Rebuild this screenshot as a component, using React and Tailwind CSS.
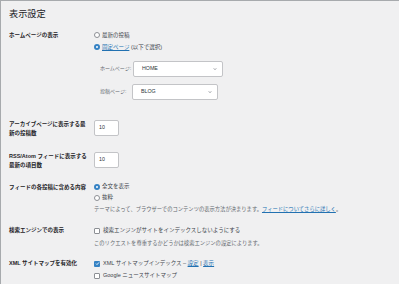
import React from 'react';

const font = { fontFamily: '"Liberation Sans", "Noto Sans CJK JP", sans-serif' };

function Radio({ checked }) {
  return checked ? (
    <span className="w-[6px] h-[6px] rounded-full border-[2px] border-[#3582c4] bg-white shrink-0" />
  ) : (
    <span className="w-[6px] h-[6px] rounded-full border border-[#8c8f94] bg-white shrink-0" />
  );
}

function Checkbox({ checked }) {
  return checked ? (
    <span className="w-[6px] h-[6px] rounded-[1px] bg-[#3582c4] shrink-0 flex items-center justify-center">
      <svg viewBox="0 0 10 10" className="w-[5px] h-[5px]" fill="none" stroke="white" strokeWidth="1.8">
        <path d="M2 5.2l2 2L8 2.8" />
      </svg>
    </span>
  ) : (
    <span className="w-[6px] h-[6px] rounded-[1px] border border-[#8c8f94] bg-white shrink-0" />
  );
}

function Chevron() {
  return (
    <svg viewBox="0 0 10 10" className="w-[4px] h-[4px]" fill="none" stroke="#50575e" strokeWidth="1.6">
      <path d="M2 3.5l3 3 3-3" />
    </svg>
  );
}

function Label({ children, className = '' }) {
  return (
    <div className={`w-[85px] shrink-0 pr-[7px] font-bold text-[5.5px] leading-[8.5px] text-[#1d2327] ${className}`}>
      {children}
    </div>
  );
}

export default function App() {
  return (
    <div style={font} className="w-[399px] h-[284px] overflow-hidden bg-[#f0f0f1] border-l border-t border-[#a7aaad] pl-[8px] text-[#1d2327]">
      <h1 className="mt-[8px] text-[9.2px] leading-[11px] font-normal text-[#1d2327]">表示設定</h1>

      {/* ホームページの表示 */}
      <div className="flex mt-[9px]">
        <Label className="pt-[1.75px]">ホームページの表示</Label>
        <div className="flex flex-col text-[5.5px]">
          <div className="h-[12px] flex items-center gap-[2px] text-[#3c434a]">
            <Radio />
            <span>最新の投稿</span>
          </div>
          <div className="h-[12px] flex items-center gap-[2px] text-[#3c434a]">
            <Radio checked />
            <span><a className="text-[#2271b1] underline">固定ページ</a> (以下で選択)</span>
          </div>
          <div className="mt-[8px] pl-[6px] flex items-center text-[#646970]">
            <span className="w-[33px] whitespace-nowrap text-[5px]">ホームページ:</span>
            <div className="w-[90px] h-[16px] bg-white border border-[#c3c4c7] rounded-[2px] flex items-center justify-between pl-[8px] pr-[5px] text-[#2c3338] text-[5.3px]">
              <span>HOME</span>
              <Chevron />
            </div>
          </div>
          <div className="mt-[7px] pl-[6px] flex items-center text-[#646970]">
            <span className="w-[32px] whitespace-nowrap text-[5px]">投稿ページ:</span>
            <div className="w-[86px] h-[16px] bg-white border border-[#c3c4c7] rounded-[2px] flex items-center justify-between pl-[8px] pr-[5px] text-[#2c3338] text-[5.3px]">
              <span>BLOG</span>
              <Chevron />
            </div>
          </div>
        </div>
      </div>

      {/* アーカイブ */}
      <div className="flex mt-[20px]">
        <Label>アーカイブページに表示する最新の投稿数</Label>
        <div className="w-[25px] h-[16px] bg-white border border-[#c3c4c7] rounded-[2px] flex items-center pl-[4px] text-[5.3px] text-[#2c3338]">10</div>
      </div>

      {/* RSS */}
      <div className="flex mt-[15px]">
        <Label>RSS/Atom フィードに表示する最新の項目数</Label>
        <div className="w-[25px] h-[16px] bg-white border border-[#c3c4c7] rounded-[2px] flex items-center pl-[4px] text-[5.3px] text-[#2c3338]">10</div>
      </div>

      {/* フィード */}
      <div className="flex mt-[12px]">
        <Label className="pt-[1.5px]">フィードの各投稿に含める内容</Label>
        <div className="flex flex-col text-[5.5px]">
          <div className="h-[11px] flex items-center gap-[2px] text-[#3c434a]">
            <Radio checked />
            <span>全文を表示</span>
          </div>
          <div className="h-[11px] flex items-center gap-[2px] text-[#3c434a]">
            <Radio />
            <span>抜粋</span>
          </div>
          <p className="mt-[2px] text-[5.3px] leading-[8px] text-[#646970]">
            テーマによって、ブラウザーでのコンテンツの表示方法が決まります。<a className="text-[#2271b1] underline">フィードについてさらに詳しく</a>。
          </p>
        </div>
      </div>

      {/* 検索エンジン */}
      <div className="flex mt-[12px]">
        <Label className="pt-[1.25px]">検索エンジンでの表示</Label>
        <div className="flex flex-col text-[5.5px]">
          <div className="h-[11px] flex items-center gap-[3px] text-[#3c434a]">
            <Checkbox />
            <span>検索エンジンがサイトをインデックスしないようにする</span>
          </div>
          <p className="mt-[3px] text-[5.3px] leading-[8px] text-[#646970]">
            このリクエストを尊重するかどうかは検索エンジンの設定によります。
          </p>
        </div>
      </div>

      {/* XML サイトマップ */}
      <div className="flex mt-[10.5px]">
        <Label className="pt-[1.75px]">XML サイトマップを有効化</Label>
        <div className="flex flex-col text-[5.5px]">
          <div className="h-[12px] flex items-center gap-[3px] text-[#3c434a]">
            <Checkbox checked />
            <span>XML サイトマップインデックス – <a className="text-[#2271b1] underline">設定</a> | <a className="text-[#2271b1] underline">表示</a></span>
          </div>
          <div className="h-[12px] flex items-center gap-[3px] text-[#3c434a]">
            <Checkbox />
            <span>Google ニュースサイトマップ</span>
          </div>
        </div>
      </div>
    </div>
  );
}
